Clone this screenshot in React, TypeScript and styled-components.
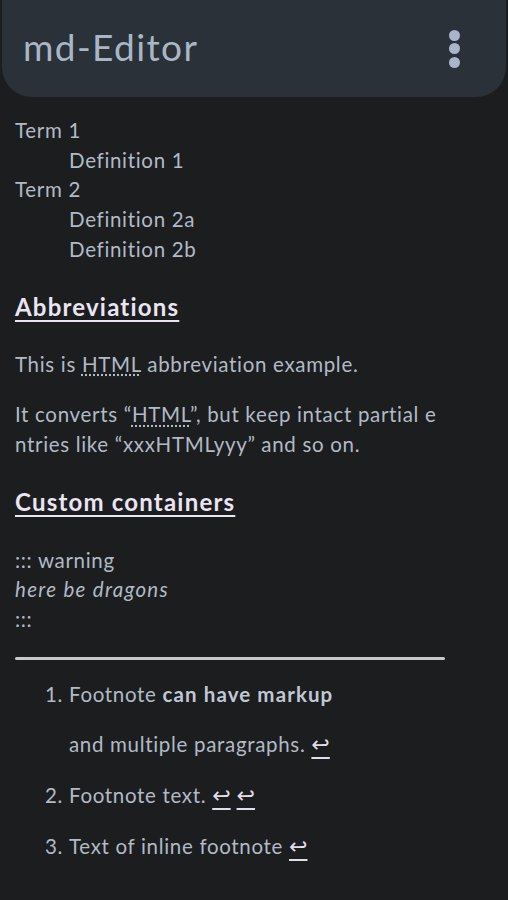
import React from "react";
import styled, { createGlobalStyle } from "styled-components";

const GlobalStyle = createGlobalStyle`
  html, body {
    margin: 0;
    padding: 0;
    background: #1c1d1f;
  }
  body {
    min-height: 900px;
    font-family: "Lato", "Noto Sans", sans-serif;
  }
`;

const Page = styled.div`
  min-height: 900px;
  background: #1c1d1f;
  color: #b1bac6;
`;

const AppBar = styled.header`
  margin: 0 2px;
  height: 97px;
  background: #2a3139;
  border-radius: 0 0 30px 30px;
  display: flex;
  align-items: center;
  justify-content: space-between;
  padding: 0 46px 0 21px;
`;

const AppTitle = styled.h1`
  margin: 0;
  font-size: 37px;
  font-weight: 400;
  color: #a9b6c6;
  letter-spacing: 1.4px;
  padding-bottom: 4px;
`;

const MenuButton = styled.button`
  background: none;
  border: none;
  padding: 0;
  display: flex;
  flex-direction: column;
  gap: 2.5px;
  cursor: pointer;
`;

const Dot = styled.span`
  width: 11px;
  height: 11px;
  border-radius: 50%;
  background: #aab4cc;
`;

const Content = styled.main`
  width: 430px;
  padding: 19px 0 30px 15px;
  font-size: 20.5px;
  line-height: 29.7px;
  letter-spacing: 0.68px;
  word-break: break-all;
`;

const DefList = styled.dl`
  margin: 0;
`;

const Term = styled.dt`
  margin: 0;
`;

const Def = styled.dd`
  margin: 0 0 0 54px;
`;

const Heading = styled.h2`
  margin: 27px 0 28px;
  font-size: 24px;
  line-height: 30px;
  font-weight: 700;
  letter-spacing: 1.2px;
  color: #ebe4f3;
  text-decoration: underline;
  text-decoration-thickness: 2px;
  text-underline-offset: 4px;
`;

const Para = styled.p`
  margin: 21px 0;
`;

const Abbr = styled.abbr`
  text-decoration: underline dotted;
  text-underline-offset: 3px;
`;

const Container = styled.div`
  margin: 29px 0 22px;
`;

const Italic = styled.em`
  letter-spacing: 1.3px;
`;

const Rule = styled.hr`
  margin: 0;
  height: 3px;
  border: none;
  border-radius: 2px;
  background: #c9c9c9;
`;

const Notes = styled.ol`
  margin: 20px 0 0;
  padding-left: 54px;
`;

const NoteItem = styled.li`
  & > p {
    margin: 0 0 21px;
  }
`;

const Strong = styled.strong`
  font-weight: 700;
  letter-spacing: 1.1px;
  color: #c0c8d4;
`;

const BackRef = styled.a`
  color: #e2dcec;
  text-decoration: underline;
  text-decoration-thickness: 2px;
  text-underline-offset: 5px;
  font-family: "DejaVu Sans", sans-serif;
  font-size: 22px;
  letter-spacing: 0;
`;

export default function App() {
  return (
    <Page>
      <GlobalStyle />
      <AppBar>
        <AppTitle>md-Editor</AppTitle>
        <MenuButton aria-label="menu">
          <Dot />
          <Dot />
          <Dot />
        </MenuButton>
      </AppBar>
      <Content>
        <DefList>
          <Term>Term 1</Term>
          <Def>Definition 1</Def>
          <Term>Term 2</Term>
          <Def>Definition 2a</Def>
          <Def>Definition 2b</Def>
        </DefList>

        <Heading>Abbreviations</Heading>
        <Para>
          This is <Abbr title="Hyper Text Markup Language">HTML</Abbr> abbreviation example.
        </Para>
        <Para>
          It converts “<Abbr title="Hyper Text Markup Language">HTML</Abbr>”, but keep intact
          partial entries like “xxxHTMLyyy” and so on.
        </Para>

        <Heading>Custom containers</Heading>
        <Container>
          <div>::: warning</div>
          <div>
            <Italic>here be dragons</Italic>
          </div>
          <div>:::</div>
        </Container>

        <Rule />
        <Notes>
          <NoteItem>
            <p>
              Footnote <Strong>can have markup</Strong>
            </p>
            <p>
              and multiple paragraphs. <BackRef href="#fnref1">↩</BackRef>
            </p>
          </NoteItem>
          <NoteItem>
            <p>
              Footnote text. <BackRef href="#fnref2">↩</BackRef>{" "}
              <BackRef href="#fnref3">↩</BackRef>
            </p>
          </NoteItem>
          <NoteItem>
            <p>
              Text of inline footnote <BackRef href="#fnref4">↩</BackRef>
            </p>
          </NoteItem>
        </Notes>
      </Content>
    </Page>
  );
}
